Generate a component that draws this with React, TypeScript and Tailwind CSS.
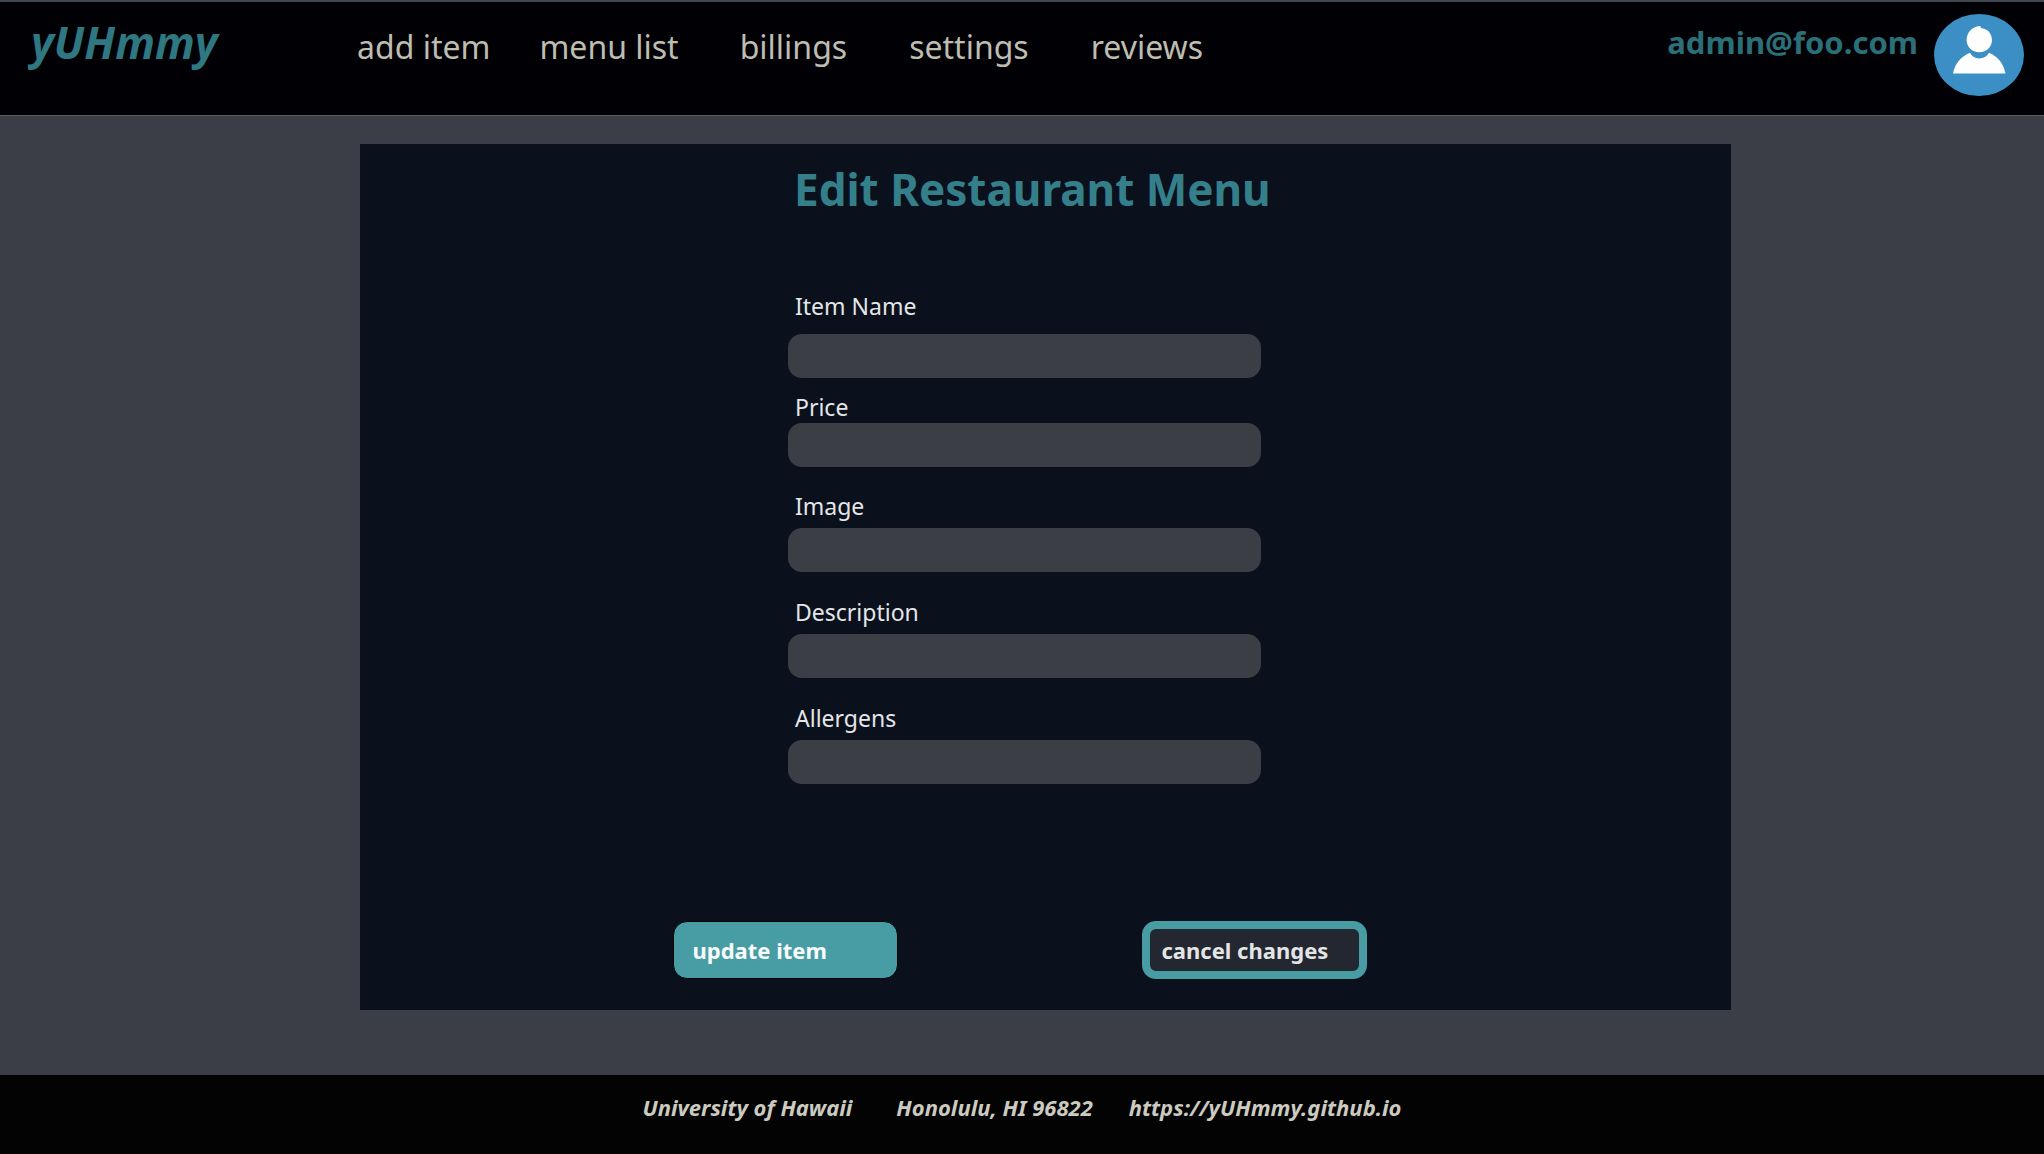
const navItems = [
  { text: "add item", gap: "" },
  { text: "menu list", gap: "ml-[49px]" },
  { text: "billings", gap: "ml-[61px]" },
  { text: "settings", gap: "ml-[62px]" },
  { text: "reviews", gap: "ml-[62px]" },
];

const fields = [
  { id: "name", label: "Item Name", spacing: "gap-3" },
  { id: "price", label: "Price", spacing: "mt-[13px]" },
  { id: "image", label: "Image", spacing: "mt-[23px] gap-1.5" },
  { id: "description", label: "Description", spacing: "mt-6 gap-1.5" },
  { id: "allergens", label: "Allergens", spacing: "mt-6 gap-1.5" },
];

function Avatar() {
  return (
    <svg viewBox="0 0 90 82" className="h-[82px] w-[90px]" aria-hidden="true">
      <ellipse cx="45" cy="41" rx="45" ry="41" fill="#3c8fc4" />
      <path
        d="M46.5 12 C38.5 12 32.6 18.5 32.6 26 C32.6 33 38.2 38.2 45.3 38.2 C52.4 38.2 58 33 58 26 C58 19.5 53.5 14.6 46.8 14 Z"
        fill="#fff"
      />
      <path
        d="M19 59.5 C21 49.5 27 42.5 36 38.7 C38 42.5 41 44.4 45.3 44.4 C49.6 44.4 53 42.5 55 38.7 C64 42.5 69.5 49.5 71.5 59.5 Z"
        fill="#fff"
      />
    </svg>
  );
}

function Header() {
  return (
    <header className="flex h-[116px] items-start justify-between border-t-2 border-b border-t-[#40464d] border-b-[#5b6068] bg-[#000005] pr-5 pl-[31px]">
      <div className="flex items-baseline pt-4">
        <a href="#home" className="w-[326px] text-[44px] leading-[48px] font-bold text-[#2f7781] italic">
          yUHmmy
        </a>
        <nav className="flex text-[32px] leading-10 whitespace-nowrap text-[#bdbdb0]">
          {navItems.map((item) => (
            <a key={item.text} href="#nav" className={item.gap}>
              {item.text}
            </a>
          ))}
        </nav>
      </div>
      <div className="flex items-start gap-4 pt-3">
        <span className="pt-2 text-[31px] leading-10 font-bold text-[#2b6f79]">admin@foo.com</span>
        <button type="button" aria-label="Account">
          <Avatar />
        </button>
      </div>
    </header>
  );
}

function MenuForm() {
  return (
    <form className="mr-[313px] ml-[360px] bg-[#0a111c] pt-4 pr-[42px] pb-[31px]">
      <div className="mx-auto w-[473px]">
        <h1 className="pl-1.5 text-[44px] leading-[58px] font-bold whitespace-nowrap text-[#357f8a]">
          Edit Restaurant Menu
        </h1>
        <div className="mt-[72px]">
          {fields.map((field) => (
            <div key={field.id} className={"flex flex-col " + field.spacing}>
              <label htmlFor={field.id} className="pl-[7px] text-[23px] leading-8 text-[#e4e6e8]">
                {field.label}
              </label>
              <input
                id={field.id}
                type="text"
                className="h-11 w-full rounded-[14px] bg-[#3b3e45] px-4 text-[23px] text-[#e4e6e8]"
              />
            </div>
          ))}
        </div>
      </div>
      <div className="mx-auto mt-[137px] flex w-[704px] justify-between pr-2.5 text-[22px] leading-8 font-bold">
        <button
          type="button"
          className="h-[58px] w-[225px] rounded-[14px] border border-[#000205] bg-[#489ca4] pl-[19px] text-left text-[#f7fbfb]"
        >
          update item
        </button>
        <button
          type="button"
          className="h-[58px] w-[225px] rounded-[14px] border-8 border-[#489ca4] bg-[#23272f] pl-3 text-left text-[#e4e5e6]"
        >
          cancel changes
        </button>
      </div>
    </form>
  );
}

export default function App() {
  return (
    <div className="flex min-h-screen flex-col bg-[#3b3e46] font-['Noto_Sans',sans-serif]">
      <Header />
      <main className="pt-7 pb-[65px]">
        <MenuForm />
      </main>
      <footer className="flex grow justify-center bg-[#030303] pt-4 text-[22px] leading-8 font-bold whitespace-nowrap text-[#cbcbc0] italic">
        <span>University of Hawaii</span>
        <span className="ml-11">Honolulu, HI 96822</span>
        <a href="https://yUHmmy.github.io" className="ml-9">
          https://yUHmmy.github.io
        </a>
      </footer>
    </div>
  );
}
